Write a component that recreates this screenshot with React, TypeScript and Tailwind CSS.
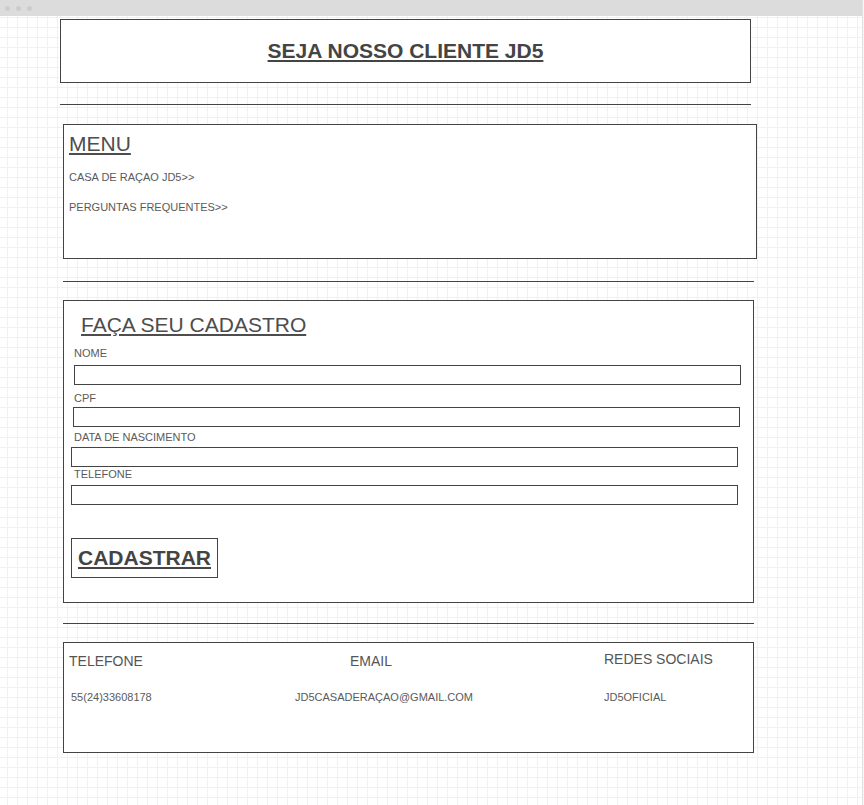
const Field = ({ label, labelClass, inputClass }: { label: string; labelClass: string; inputClass: string }) => (
  <>
    <label className={`block text-[11px] leading-[14px] text-[#5a5a5a] ${labelClass}`}>{label}</label>
    <input type="text" className={`block h-[20px] w-[667px] border border-[#444] bg-white outline-none ${inputClass}`} />
  </>
);

const Rule = ({ className }: { className: string }) => <div className={`h-px bg-[#444] ${className}`} />;

export default function App() {
  return (
    <div className="flex min-h-[805px] w-full font-['Liberation_Sans',Arial,sans-serif] text-[#4a4a4a]">
      <div className="w-[862px] bg-white bg-[linear-gradient(to_right,#f1f1f1_1px,transparent_1px),linear-gradient(to_bottom,#f1f1f1_1px,transparent_1px)] bg-[size:10px_10px] bg-[position:7px_7px]">
        {/* browser bar */}
        <div className="flex h-[16px] items-center gap-[6px] bg-[#dcdcdc] pl-[5px]">
          <span className="h-[5px] w-[5px] rounded-full bg-[#cdcdcd]" />
          <span className="h-[5px] w-[5px] rounded-full bg-[#cdcdcd]" />
          <span className="h-[5px] w-[5px] rounded-full bg-[#cdcdcd]" />
        </div>

        <div className="flex flex-col pb-[50px]">
          {/* header */}
          <div className="ml-[60px] mt-[3px] flex h-[64px] w-[691px] items-center justify-center border border-[#444] bg-white">
            <h1 className="text-[21px] font-bold leading-[24px] text-[#444] underline">SEJA NOSSO CLIENTE JD5</h1>
          </div>

          <Rule className="ml-[60px] mt-[21px] w-[691px]" />

          {/* menu */}
          <div className="ml-[63px] mt-[19px] flex h-[135px] w-[694px] flex-col border border-[#444] bg-white pl-[5px] pt-[7px]">
            <h2 className="text-[21px] leading-[24px] text-[#4d4d4d] underline">MENU</h2>
            <a className="mt-[14px] text-[11px] leading-[14px] text-[#5a5a5a]">CASA DE RAÇAO JD5&gt;&gt;</a>
            <a className="mt-[16px] text-[11px] leading-[14px] text-[#5a5a5a]">PERGUNTAS FREQUENTES&gt;&gt;</a>
          </div>

          <Rule className="ml-[63px] mt-[22px] w-[691px]" />

          {/* cadastro */}
          <div className="ml-[63px] mt-[18px] flex h-[303px] w-[691px] flex-col border border-[#444] bg-white pt-[12px]">
            <h2 className="ml-[17px] text-[21px] leading-[24px] text-[#4d4d4d] underline">FAÇA SEU CADASTRO</h2>
            <Field label="NOME" labelClass="ml-[10px] mt-[9px]" inputClass="ml-[10px] mt-[5px]" />
            <Field label="CPF" labelClass="ml-[10px] mt-[6px]" inputClass="ml-[9px] mt-[2px]" />
            <Field label="DATA DE NASCIMENTO" labelClass="ml-[10px] mt-[3px]" inputClass="ml-[7px] mt-[3px]" />
            <Field label="TELEFONE" labelClass="ml-[10px] mt-0" inputClass="ml-[7px] mt-[4px]" />
            <button className="ml-[7px] mt-[33px] flex h-[40px] w-[147px] items-center justify-center border border-[#444] bg-white text-[21px] font-bold text-[#444] underline">
              CADASTRAR
            </button>
          </div>

          <Rule className="ml-[63px] mt-[20px] w-[691px]" />

          {/* contato */}
          <div className="ml-[63px] mt-[18px] flex h-[111px] w-[691px] border border-[#444] bg-white">
            <div className="flex w-[231px] flex-col pt-[10px]">
              <span className="ml-[5px] text-[14px] leading-[17px] text-[#555]">TELEFONE</span>
              <span className="ml-[7px] mt-[20px] text-[11px] leading-[14px] text-[#5a5a5a]">55(24)33608178</span>
            </div>
            <div className="flex w-[309px] flex-col pt-[10px]">
              <span className="ml-[55px] text-[14px] leading-[17px] text-[#555]">EMAIL</span>
              <span className="mt-[20px] text-[11px] leading-[14px] text-[#5a5a5a]">JD5CASADERAÇAO@GMAIL.COM</span>
            </div>
            <div className="flex flex-1 flex-col pt-[8px]">
              <span className="text-[14px] leading-[17px] text-[#555]">REDES SOCIAIS</span>
              <span className="mt-[22px] text-[11px] leading-[14px] text-[#5a5a5a]">JD5OFICIAL</span>
            </div>
          </div>
        </div>
      </div>
      <div className="flex-1 border-l border-[#e2e2e2] bg-[#f7f7f7]" />
    </div>
  );
}
